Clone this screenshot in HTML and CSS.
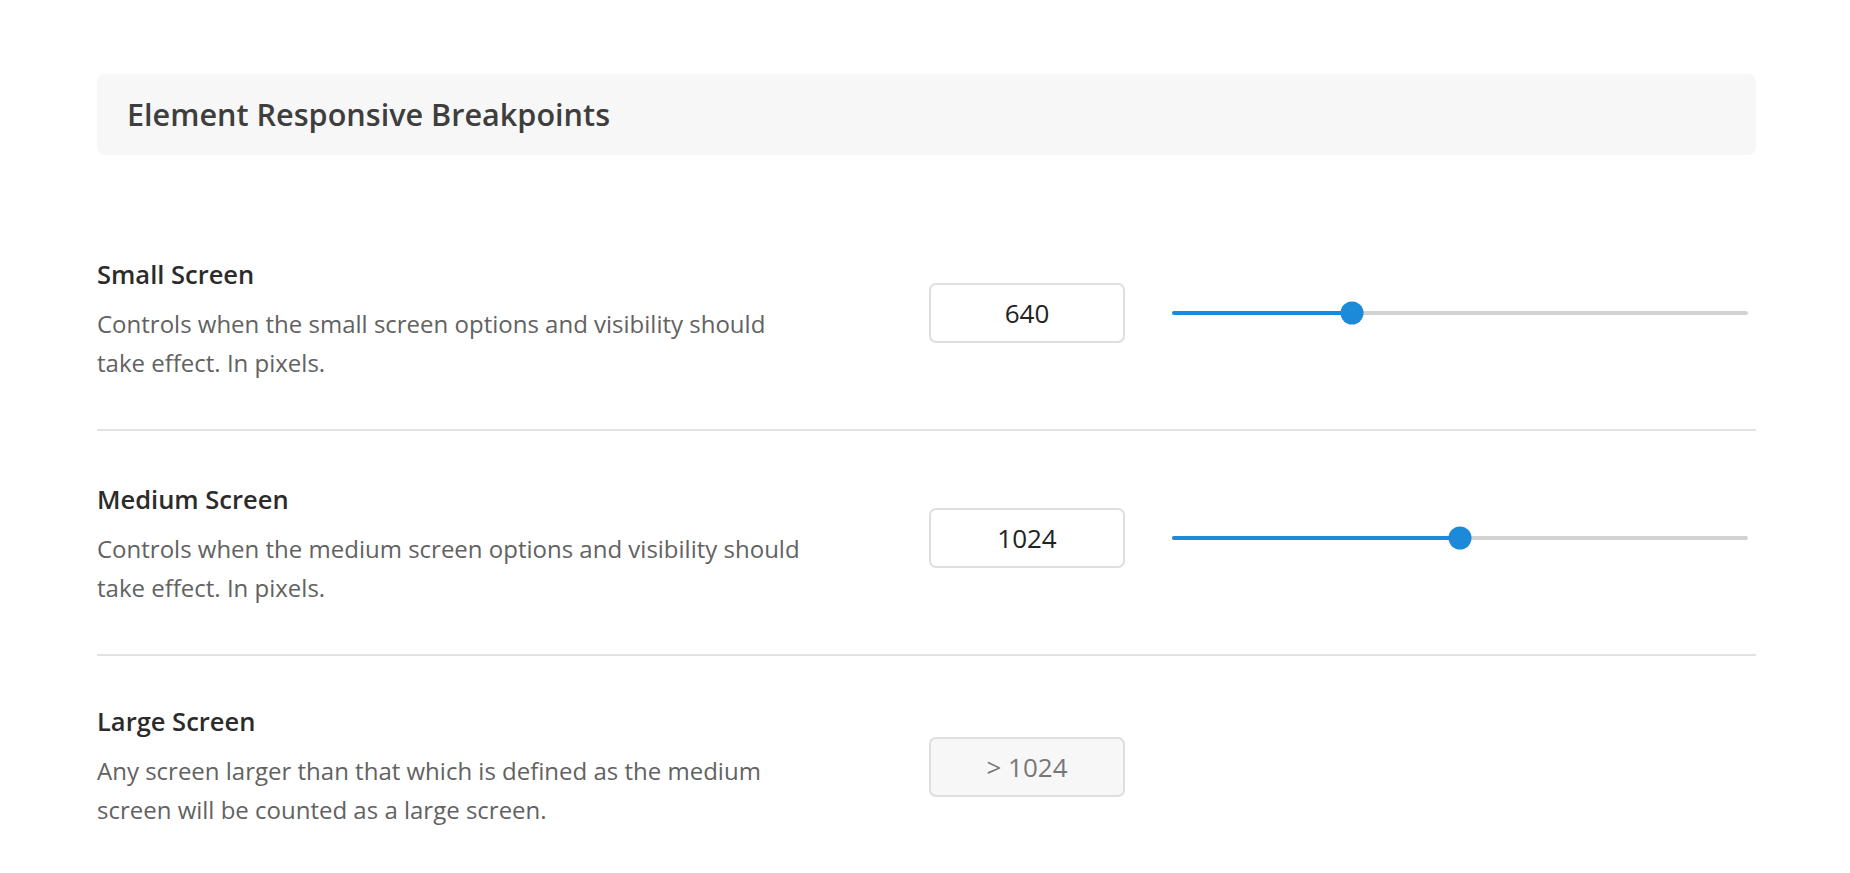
FILE: index.html
```html
<!DOCTYPE html>
<html lang="en">
<head>
    <meta charset="UTF-8">
    <meta name="viewport" content="width=device-width, initial-scale=1.0">
    <title>Element Responsive Breakpoints</title>
    <link rel="stylesheet" href="styles.css">
</head>
<body>
    <div class="page">
        <div class="section-header">
            <h2>Element Responsive Breakpoints</h2>
        </div>

        <div class="settings">
            <div class="setting-row">
                <div class="setting-info">
                    <h3>Small Screen</h3>
                    <p>Controls when the small screen options and visibility should take effect. In pixels.</p>
                </div>
                <div class="setting-control">
                    <input class="value-box" type="text" value="640">
                    <div class="slider">
                        <div class="slider-fill" style="width: 31.25%"></div>
                        <div class="slider-thumb" style="left: 31.25%"></div>
                    </div>
                </div>
            </div>

            <div class="setting-row">
                <div class="setting-info">
                    <h3>Medium Screen</h3>
                    <p>Controls when the medium screen options and visibility should take effect. In pixels.</p>
                </div>
                <div class="setting-control">
                    <input class="value-box" type="text" value="1024">
                    <div class="slider">
                        <div class="slider-fill" style="width: 50%"></div>
                        <div class="slider-thumb" style="left: 50%"></div>
                    </div>
                </div>
            </div>

            <div class="setting-row">
                <div class="setting-info">
                    <h3>Large Screen</h3>
                    <p>Any screen larger than that which is defined as the medium screen will be counted as a large screen.</p>
                </div>
                <div class="setting-control static">
                    <input class="value-box disabled" type="text" value="> 1024" disabled>
                </div>
            </div>
        </div>
    </div>
</body>
</html>
```

FILE: styles.css
```css
* {
    margin: 0;
    padding: 0;
    box-sizing: border-box;
}

body {
    background: #fff;
    font-family: 'Open Sans', 'Noto Sans', sans-serif;
    color: #333;
}

.page {
    padding: 74px 94px 0 97px;
}

.section-header {
    display: flex;
    align-items: center;
    height: 81px;
    padding: 0 30px;
    background: #f7f7f7;
    border-radius: 8px;
}

.section-header h2 {
    font-size: 30.6px;
    font-weight: 600;
    color: #3e3e3e;
    line-height: 1;
}

.settings {
    margin-top: 51px;
}

.setting-row {
    display: flex;
    padding: 50px 0 47px;
    border-bottom: 2px solid #e2e2e2;
}

.setting-row:last-child {
    padding-top: 47px;
    border-bottom: none;
}

.setting-info {
    flex: 0 0 832px;
}

.setting-info h3 {
    font-size: 25.5px;
    font-weight: 600;
    line-height: 36px;
    color: #2b2b2b;
}

.setting-info p {
    max-width: 712px;
    margin-top: 12px;
    font-size: 24px;
    line-height: 39px;
    color: #626262;
}

.setting-control {
    flex: 1;
    display: flex;
    align-items: center;
    gap: 45px;
    margin-top: 27px;
    height: 60px;
}

.setting-control.static {
    margin-top: 34px;
}

.value-box {
    width: 196px;
    height: 60px;
    border: 2px solid #dedede;
    border-radius: 7px;
    background: #fff;
    font-family: inherit;
    font-size: 26px;
    color: #222;
    text-align: center;
    outline: none;
}

.value-box.disabled {
    background: #f7f7f7;
    color: #777;
}

.slider {
    position: relative;
    flex: 1;
    height: 4px;
    margin-left: 2px;
    margin-right: 8px;
    background: #d2d2d2;
    border-radius: 2px;
}

.slider-fill {
    height: 100%;
    background: #1a8ad9;
    border-radius: 2px;
}

.slider-thumb {
    position: absolute;
    top: 50%;
    width: 23px;
    height: 23px;
    background: #1a8ad9;
    border-radius: 50%;
    transform: translate(-50%, -50%);
}
```
